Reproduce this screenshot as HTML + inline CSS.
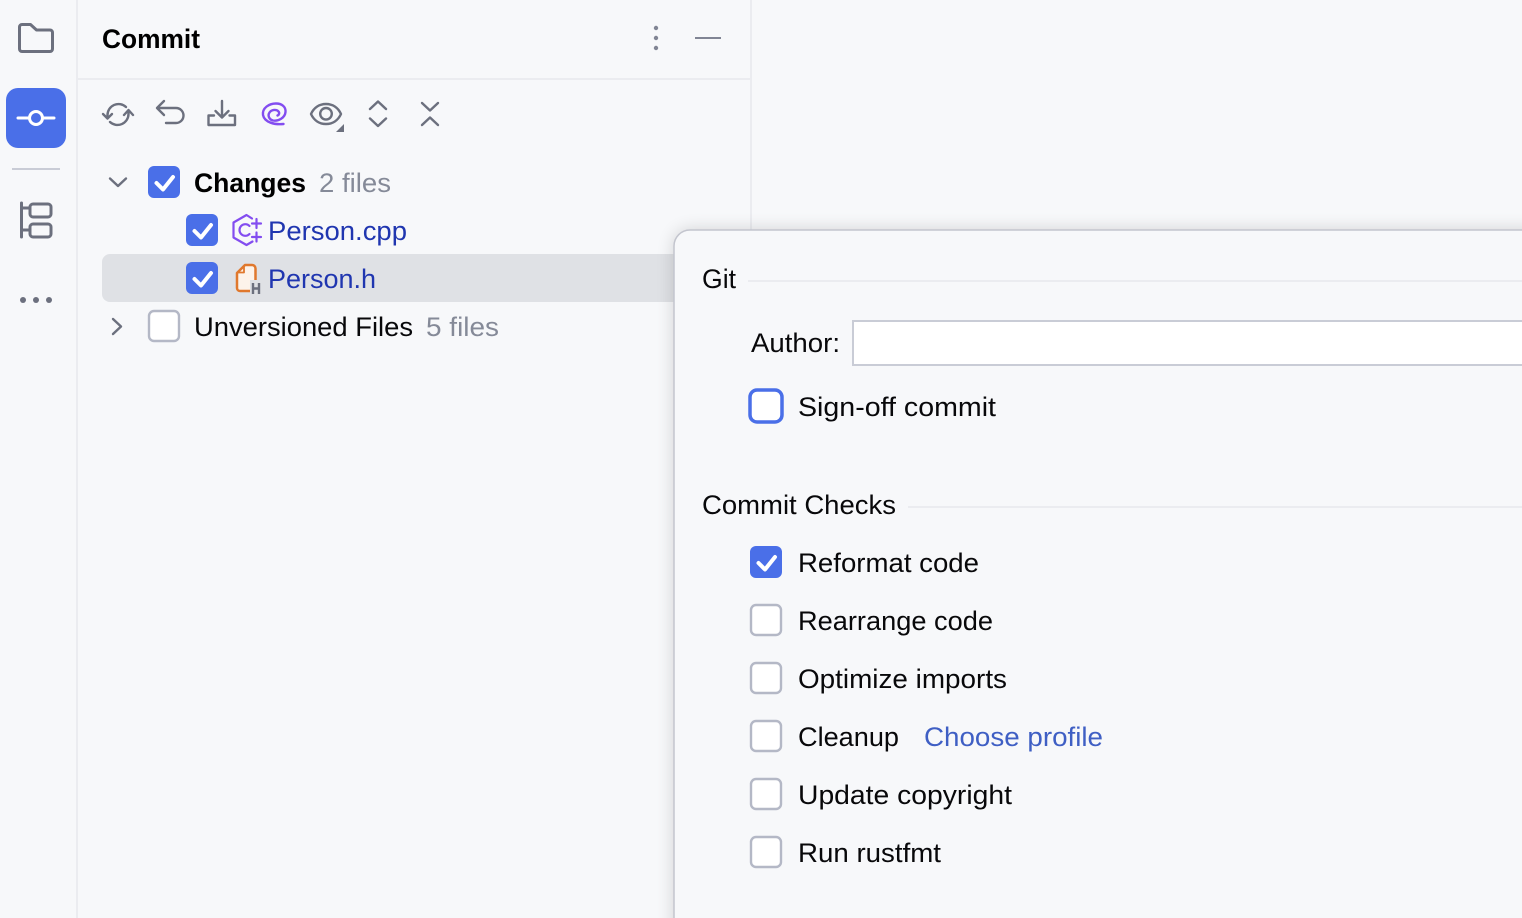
<!DOCTYPE html>
<html><head><meta charset="utf-8">
<style>
html,body{margin:0;padding:0;background:#F7F8FA;width:1522px;height:918px;overflow:hidden}
svg{display:block}
text{font-family:"Liberation Sans",sans-serif;font-size:27px;fill:#08080a}
.b{font-weight:bold;fill:#000}
.g{fill:#858A98}
.l{fill:#2036B0}
.i{fill:none;stroke:#6C707E;stroke-width:2.400;stroke-linecap:round;stroke-linejoin:round}
.c{fill:none;stroke:#fff;stroke-width:4;stroke-linecap:round;stroke-linejoin:round}
</style></head><body>
<svg width="1522" height="918" viewBox="0 0 1522 918" xmlns="http://www.w3.org/2000/svg">
<defs>
<filter id="s" x="-10%" y="-10%" width="120%" height="120%"><feGaussianBlur stdDeviation="9"/></filter>
</defs>
<rect width="1522" height="918" fill="#F7F8FA"/>
<rect x="76" y="0" width="2" height="918" fill="#EBECF0"/>
<rect x="78" y="78" width="672" height="2" fill="#EBECF0"/>
<rect x="750" y="0" width="2" height="240" fill="#EBECF0"/>

<!-- left bar -->
<path class="i" style="stroke-width:3" d="M19.500 27a2.500 2.500 0 0 1 2.500-2.500h8.500l6 5.500H50a2.500 2.500 0 0 1 2.500 2.500v16.500a2.500 2.500 0 0 1-2.500 2.500H22a2.500 2.500 0 0 1-2.500-2.500z"/>
<rect x="6" y="88" width="60" height="60" rx="12" fill="#4A6FE8"/>
<g fill="none" stroke="#fff" stroke-width="3" stroke-linecap="round"><circle cx="36" cy="118" r="6.500"/><path d="M18 118h10M44 118h10"/></g>
<rect x="12" y="168" width="48" height="2" fill="#C9CCD6"/>
<g class="i" style="stroke-width:3"><path d="M21.500 203v34M21.500 208h8M21.500 230h8"/><rect x="30" y="204" width="21" height="13" rx="3"/><rect x="30" y="224" width="21" height="13" rx="3"/></g>
<g fill="#6C707E"><circle cx="23" cy="300" r="3"/><circle cx="36" cy="300" r="3"/><circle cx="49" cy="300" r="3"/></g>

<!-- header -->
<text x="102" y="48" class="b" textLength="98" lengthAdjust="spacingAndGlyphs">Commit</text>
<g fill="#818594"><circle cx="656" cy="28" r="2.200"/><circle cx="656" cy="38" r="2.200"/><circle cx="656" cy="48" r="2.200"/></g>
<rect x="695" y="37" width="26" height="2" fill="#818594"/>

<!-- toolbar -->
<g class="i">
<path d="M103 114l4.500 4.500 4.500-4.500M107.500 118v-3a11 11 0 0 1 18.500-8"/>
<path d="M133 115l-4.500-5-4.500 5M128.500 111v3a11 11 0 0 1-18.500 8"/>
<path d="M164 101l-7 7 7 7M158 108h18a7.500 7.500 0 0 1 0 15h-10"/>
<path d="M222 101v16M215.500 111l6.500 6.500 6.500-6.500M214 115.500h-5.500v9.500h26.500v-9.500h-5.500"/>
<path d="M311 114c3-6.500 8.500-10 15-10s12 3.500 15 10c-3 6.500-8.500 10-15 10s-12-3.500-15-10z"/>
<circle cx="326" cy="113.800" r="5.800"/>
<path d="M370 109l8-7.500 8 7.500M370 118.500l8 7.500 8-7.500"/>
<path d="M422 103l8 7.500 8-7.500M422 125l8-7.500 8 7.500"/>
</g>
<path d="M344 124v8h-8z" fill="#6C707E"/>
<path d="M283.500 124C275 125 264.500 122.500 263 115C262 108 269 103.500 276 103.500C282 103.500 286 107 285.500 112C285 118 278 121.500 273 120.500C269 119.500 267.500 115.500 269.500 112.500C271.500 109.500 276.500 109 278.500 111.500C279.800 113 279 115 277.500 115.500" fill="none" stroke="#834DF0" stroke-width="2.400" stroke-linecap="round" stroke-linejoin="round"/>

<!-- tree -->
<rect x="102" y="254" width="600" height="48" rx="8" fill="#DFE1E5"/>
<path class="i" d="M110 178.500l8 7.500 8-7.500"/>
<path class="i" d="M113 319l8 7.500-8 7.500"/>

<rect x="148" y="166" width="32" height="32" rx="6" fill="#4A6FE8"/><path class="c" d="M156.500 183l6.500 6.500 10-12.500"/>
<rect x="186" y="214" width="32" height="32" rx="6" fill="#4A6FE8"/><path class="c" d="M194.500 231l6.500 6.500 10-12.500"/>
<rect x="186" y="262" width="32" height="32" rx="6" fill="#4A6FE8"/><path class="c" d="M194.500 279l6.500 6.500 10-12.500"/>
<rect x="149" y="311" width="30" height="30" rx="5" fill="#fff" stroke="#B4B8C6" stroke-width="2.400"/>

<text x="194" y="192" class="b" textLength="112" lengthAdjust="spacingAndGlyphs">Changes</text>
<text x="319" y="192" class="g" textLength="72" lengthAdjust="spacingAndGlyphs">2 files</text>
<text x="268" y="240" class="l" textLength="139" lengthAdjust="spacingAndGlyphs">Person.cpp</text>
<text x="268" y="288" class="l" textLength="108" lengthAdjust="spacingAndGlyphs">Person.h</text>
<text x="194" y="336" textLength="219" lengthAdjust="spacingAndGlyphs">Unversioned Files</text>
<text x="426" y="336" class="g" textLength="73" lengthAdjust="spacingAndGlyphs">5 files</text>

<!-- cpp icon -->
<g fill="none" stroke="#834DF0" stroke-width="2.200" stroke-linecap="round" stroke-linejoin="round">
<path d="M252 218.500l-5.500-3.500-13 7.500v15l13 7.500 6-3.500"/>
<path d="M249.500 226a5.800 5.800 0 1 0 0 8"/>
<path d="M252 223.500h9M256.500 219v9M252 237h9M256.500 232.500v9"/>
</g>
<!-- h icon -->
<path d="M245 265h7a3.500 3.500 0 0 1 3.500 3.500V288a3 3 0 0 1-3 3H240a3 3 0 0 1-3-3v-15z" fill="#FDF3EA" stroke="#E0782D" stroke-width="2.500" stroke-linejoin="round"/>
<path d="M244 266.500v6h-6" fill="none" stroke="#E0782D" stroke-width="1.800" stroke-linejoin="round"/>
<rect x="250" y="280" width="12" height="15" fill="#DFE1E5"/>
<path d="M253 283v11M259 283v11M253 288.500h6" fill="none" stroke="#6C707E" stroke-width="2.400"/>

<!-- popup -->
<rect x="674" y="230" width="900" height="720" rx="16" fill="#000" opacity=".16" filter="url(#s)"/>
<rect x="674" y="230" width="900" height="720" rx="16" fill="#F7F8FA" stroke="#C3C5CE" stroke-width="1.500"/>

<text x="702" y="288" textLength="34" lengthAdjust="spacingAndGlyphs">Git</text>
<rect x="748" y="280" width="780" height="2" fill="#EBECF0"/>
<text x="751" y="352" textLength="89" lengthAdjust="spacingAndGlyphs">Author:</text>
<rect x="853" y="321" width="700" height="44" fill="#fff" stroke="#C9CCD6" stroke-width="2"/>

<rect x="750" y="390" width="32" height="32" rx="7" fill="#fff" stroke="#4A6FE8" stroke-width="3.500"/>
<text x="798" y="416" textLength="198" lengthAdjust="spacingAndGlyphs">Sign-off commit</text>

<text x="702" y="514" textLength="194" lengthAdjust="spacingAndGlyphs">Commit Checks</text>
<rect x="908" y="506" width="620" height="2" fill="#EBECF0"/>

<rect x="750" y="546" width="32" height="32" rx="6" fill="#4A6FE8"/><path class="c" d="M758.500 563l6.500 6.500 10-12.500"/>
<text x="798" y="572" textLength="181" lengthAdjust="spacingAndGlyphs">Reformat code</text>

<g fill="#fff" stroke="#B4B8C6" stroke-width="2.400">
<rect x="751" y="605" width="30" height="30" rx="5"/>
<rect x="751" y="663" width="30" height="30" rx="5"/>
<rect x="751" y="721" width="30" height="30" rx="5"/>
<rect x="751" y="779" width="30" height="30" rx="5"/>
<rect x="751" y="837" width="30" height="30" rx="5"/>
</g>
<text x="798" y="630" textLength="195" lengthAdjust="spacingAndGlyphs">Rearrange code</text>
<text x="798" y="688" textLength="209" lengthAdjust="spacingAndGlyphs">Optimize imports</text>
<text x="798" y="746" textLength="101" lengthAdjust="spacingAndGlyphs">Cleanup</text>
<text x="924" y="746" textLength="179" lengthAdjust="spacingAndGlyphs" style="fill:#3F5FC4">Choose profile</text>
<text x="798" y="804" textLength="214" lengthAdjust="spacingAndGlyphs">Update copyright</text>
<text x="798" y="862" textLength="143" lengthAdjust="spacingAndGlyphs">Run rustfmt</text>
</svg>
</body></html>
